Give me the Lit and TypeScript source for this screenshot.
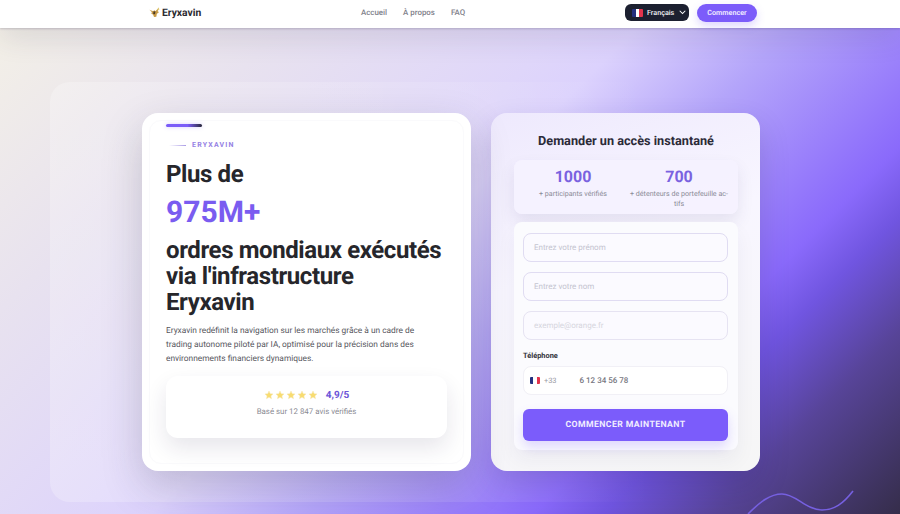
import { LitElement, html, css, svg } from "lit";
import { customElement } from "lit/decorators.js";

const star = svg`<svg class="star" viewBox="0 0 24 24"><path d="M12 2.5l2.9 6.2 6.8.8-5 4.6 1.3 6.7-6-3.4-6 3.4 1.3-6.7-5-4.6 6.8-.8z" fill="#f8dc70" stroke="#f6e9b8" stroke-width="1.4"/></svg>`;

@customElement("app-root")
export class AppRoot extends LitElement {
  static styles = css`
    :host { display: block; width: 900px; height: 514px; overflow: hidden; position: relative; font-family: Roboto, "Noto Sans", sans-serif; color: #26262e; text-rendering: geometricPrecision; }
    * { box-sizing: border-box; }
    .page { height: 514px; display: flex; flex-direction: column; background: linear-gradient(135deg, #f4f1e6 0%, #e8e2ef 22%, #dfd6fa 42%, #dcd2fd 47%, #b4a5fa 58%, #9a80fb 68%, #8a6afb 74%, #7055e0 79%, #574498 87%, #352d4a 100%); position: relative; overflow: hidden; }
    header { height: 28px; flex: none; background: #fff; box-shadow: 0 1px 2px rgba(40,30,70,.2), 0 8px 30px rgba(50,40,80,.14); display: flex; align-items: center; padding: 0 143px 3px 149px; position: relative; z-index: 2; }
    .logo { display: flex; align-items: center; gap: 2px; font-size: 10.3px; font-weight: 700; color: #2a2a30; width: 212px; }
    .logo svg { width: 11px; height: 11px; }
    nav { display: flex; gap: 16px; font-size: 7.9px; font-weight: 500; color: #80808a; flex: 1; }
    .lang { display: flex; align-items: center; gap: 4px; width: 64px; height: 17px; background: #1c2030; border-radius: 6px; color: #f2f2f5; font-size: 7.2px; font-weight: 500; padding-left: 7px; margin-right: 8px; }
    .flag { display: inline-flex; width: 11px; height: 8px; border-radius: 1px; overflow: hidden; flex: none; }
    .flag i { flex: 1; }
    .b { background: #24307f; } .w { background: #fff; } .r { background: #e3344c; }
    .lang svg { width: 7px; height: 5px; margin-left: 1px; }
    .cta { width: 60px; height: 18px; display: flex; align-items: center; justify-content: center; background: #7c5cfa; border-radius: 9px; color: #f0ecff; font-size: 7.2px; font-weight: 600; box-shadow: 0 4px 8px rgba(124,92,250,.25); }
    .panel { margin: 54px 50px 0; height: 420px; border-radius: 20px; background: linear-gradient(90deg, rgba(255,255,255,.24), rgba(255,255,255,.1) 50%, rgba(255,255,255,0) 75%); padding: 31px 90px 31px 92px; display: grid; grid-template-columns: 329px 269px; gap: 20px; align-items: start; }
    .left { height: 358px; position: relative; background: #fff; border-radius: 16px; padding: 26px 24px 0; box-shadow: 0 16px 40px rgba(50,50,70,.22); display: flex; flex-direction: column; }
    .left::before { content: ""; position: absolute; inset: 7px; border: 1px solid #fafafc; border-radius: 12px; pointer-events: none; }
    .bar { position: absolute; left: 24px; top: 11px; width: 36px; height: 3px; border-radius: 2px; background: linear-gradient(90deg, #7a5cf8 60%, #28283a); box-shadow: 0 0 4px rgba(122,92,248,.35); }
    .label { display: flex; align-items: center; gap: 6px; height: 12px; padding-left: 3px; font-size: 7px; font-weight: 700; letter-spacing: 1.2px; color: #9682e4; position: relative; }
    .label i { width: 17px; height: 1px; background: linear-gradient(90deg, transparent, #a99be6); }
    h1 { margin: 0; font-size: 24px; line-height: 26px; font-weight: 700; letter-spacing: -.4px; color: #26262b; position: relative; }
    .h1a { margin-top: 10px; }
    .big { margin: 8px 0 6px; font-size: 30px; line-height: 36px; font-weight: 700; color: #7a5cf0; position: relative; }
    p { margin: 9px 0 0; max-width: 258px; font-size: 8.35px; line-height: 14px; color: #55555c; position: relative; }
    .rating { margin-top: 10px; height: 62px; width: 281px; background: #fff; border-radius: 12px; box-shadow: 0 10px 22px rgba(40,30,70,.11); display: flex; flex-direction: column; align-items: center; padding-top: 12px; position: relative; z-index: 1; }
    .stars { display: flex; align-items: center; height: 14px; }
    .star { width: 10px; height: 10px; margin-right: 1px; }
    .score { font-size: 10px; font-weight: 700; color: #6d55d8; margin-left: 7px; }
    .based { margin-top: 5px; font-size: 7.9px; line-height: 10px; color: #8a8a92; }
    .right { height: 358px; background: linear-gradient(160deg, #eee9fd 0%, #f8f6ff 40%, #f6f6f6 100%); border-radius: 16px; padding: 20px 22px 0 23px; box-shadow: 0 14px 30px rgba(40,30,90,.18); display: flex; flex-direction: column; }
    h2 { margin: 0; height: 18px; text-align: center; font-size: 12.7px; line-height: 18px; font-weight: 700; color: #2b2a38; }
    .stats { margin-top: 9px; height: 54px; background: rgba(245,242,255,.9); border-radius: 8px; box-shadow: 0 8px 16px rgba(60,50,110,.1); display: grid; grid-template-columns: 1fr 1fr; padding: 8px 6px 0; text-align: center; }
    .num { font-size: 16px; line-height: 17px; font-weight: 700; color: #7a62e0; }
    .sub { font-size: 7.1px; line-height: 9.5px; color: #8a8a96; margin-top: 4px; }
    .form { margin-top: 8px; height: 228px; background: #fbfbfe; border-radius: 8px; padding: 11px 10px 0 9px; display: flex; flex-direction: column; box-shadow: 0 10px 20px rgba(40,30,70,.05); }
    .in { height: 29px; border: 1px solid #e0dcf2; border-radius: 8px; background: #fbfaff; display: flex; align-items: center; padding-left: 10px; font-size: 8px; color: #c4c4d0; margin-bottom: 10px; flex: none; }
    .in.mail { color: #d6d6de; border-color: #e6e3f2; }
    .tl { font-size: 7.4px; line-height: 10px; font-weight: 700; color: #33333b; margin-top: 1px; }
    .tel { margin-top: 5px; height: 29px; border: 1px solid #f1f0f6; border-radius: 8px; background: #fff; display: flex; align-items: center; padding-left: 6px; font-size: 7.4px; color: #9a9aa4; flex: none; }
    .tel .flag { width: 10px; height: 7px; margin-right: 4px; }
    .tel b { font-size: 8px; font-weight: 500; color: #77777f; margin-left: 23px; }
    .go { margin-top: 14px; height: 32px; background: #7b5cfb; border-radius: 6px; display: flex; align-items: center; justify-content: center; color: #f0edff; font-size: 8.7px; font-weight: 700; letter-spacing: .4px; box-shadow: 0 6px 12px rgba(123,92,251,.22); flex: none; }
    .wave { position: absolute; left: 746px; top: 490px; width: 108px; height: 24px; }
  `;

  render() {
    const flag = html`<span class="flag"><i class="b"></i><i class="w"></i><i class="r"></i></span>`;
    return html`<div class="page">
      <header>
        <div class="logo"><svg viewBox="0 0 24 24"><path d="M1 6l8 3 3-2 2 2 8-8-3 9 3 1-5 4-1 6-5 1-2-5-5-4 3-1z" fill="#c79a45"/><path d="M10 9l4 1-1 6-4-1z" fill="#4a3a28"/><path d="M20 1l3 4-5 3z" fill="#e0cb72"/></svg><span>Eryxavin</span></div>
        <nav><span>Accueil</span><span>À propos</span><span>FAQ</span></nav>
        <div class="lang">${flag}<span>Français</span><svg viewBox="0 0 10 7"><path d="M1 1l4 4 4-4" fill="none" stroke="#fff" stroke-width="1.5"/></svg></div>
        <div class="cta">Commencer</div>
      </header>
      <div class="panel">
        <section class="left">
          <div class="bar"></div>
          <div class="label"><i></i><span>ERYXAVIN</span></div>
          <h1 class="h1a">Plus de</h1>
          <div class="big">975M+</div>
          <h1>ordres mondiaux exécutés via l'infrastructure Eryxavin</h1>
          <p>Eryxavin redéfinit la navigation sur les marchés grâce à un cadre de trading autonome piloté par IA, optimisé pour la précision dans des environnements financiers dynamiques.</p>
          <div class="rating">
            <div class="stars">${star}${star}${star}${star}${star}<span class="score">4,9/5</span></div>
            <div class="based">Basé sur 12 847 avis vérifiés</div>
          </div>
        </section>
        <section class="right">
          <h2>Demander un accès instantané</h2>
          <div class="stats">
            <div><div class="num">1000</div><div class="sub">+ participants vérifiés</div></div>
            <div><div class="num">700</div><div class="sub">+ détenteurs de portefeuille ac-<br>tifs</div></div>
          </div>
          <div class="form">
            <div class="in">Entrez votre prénom</div>
            <div class="in">Entrez votre nom</div>
            <div class="in mail">exemple@orange.fr</div>
            <div class="tl">Téléphone</div>
            <div class="tel">${flag}<span>+33</span><b>6 12 34 56 78</b></div>
            <div class="go">COMMENCER MAINTENANT</div>
          </div>
        </section>
      </div>
      <svg class="wave" viewBox="0 0 108 24" fill="none"><path d="M2 24C14 12 24 4 36 4c14 0 24 16 40 16 12 0 21-6 31-19" stroke="#7660e0" stroke-width="1.6"/></svg>
    </div>`;
  }
}
